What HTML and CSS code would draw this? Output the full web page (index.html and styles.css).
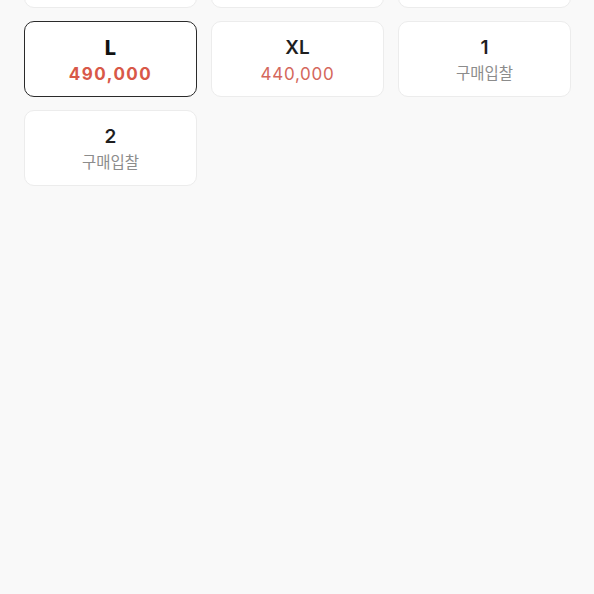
FILE: index.html
```html
<!DOCTYPE html>
<html lang="ko">
<head>
    <meta charset="UTF-8">
    <meta name="viewport" content="width=device-width, initial-scale=1.0">
    <title>사이즈 선택</title>
    <link rel="stylesheet" href="styles.css">
</head>
<body>

<div class="size-grid">
    <!-- 윗줄은 스크롤되어 끝부분만 보임 -->
    <div class="size-card"></div>
    <div class="size-card"></div>
    <div class="size-card"></div>

    <div class="size-card selected">
        <span class="size-name">L</span>
        <span class="size-price">490,000</span>
    </div>
    <div class="size-card">
        <span class="size-name">XL</span>
        <span class="size-price">440,000</span>
    </div>
    <div class="size-card">
        <span class="size-name">1</span>
        <span class="size-bid">구매입찰</span>
    </div>

    <div class="size-card">
        <span class="size-name">2</span>
        <span class="size-bid">구매입찰</span>
    </div>
</div>

</body>
</html>
```

FILE: styles.css
```css
body {
    font-family: Inter, "Noto Sans CJK KR", sans-serif;
    background-color: #f9f9f9;
    margin: 0;
    padding: 0;
    height: 594px;
    overflow: hidden;
}
.size-grid {
    display: grid;
    grid-template-columns: repeat(3, 173px);
    column-gap: 14px;
    row-gap: 13px;
    margin-top: -68px;
    padding-left: 24px;
}
.size-card {
    height: 76px;
    box-sizing: border-box;
    padding-top: 4px;
    background: #fff;
    border: 1px solid #ececec;
    border-radius: 10px;
    display: flex;
    flex-direction: column;
    align-items: center;
    justify-content: center;
    gap: 4px;
}
.size-card.selected {
    border: 1.5px solid #2a2a2a;
}
.size-name {
    font-size: 19px;
    font-weight: 600;
    line-height: 22px;
    color: #1f1f1f;
}
.selected .size-name {
    font-size: 20px;
    font-weight: 800;
    color: #111;
}
.size-price {
    font-size: 17px;
    line-height: 22px;
    color: #d4675c;
    letter-spacing: 0.7px;
}
.selected .size-price {
    font-weight: 700;
    color: #d85848;
    letter-spacing: 1.5px;
}
.size-bid {
    font-size: 15.5px;
    line-height: 22px;
    color: #8c8c8c;
}
```
